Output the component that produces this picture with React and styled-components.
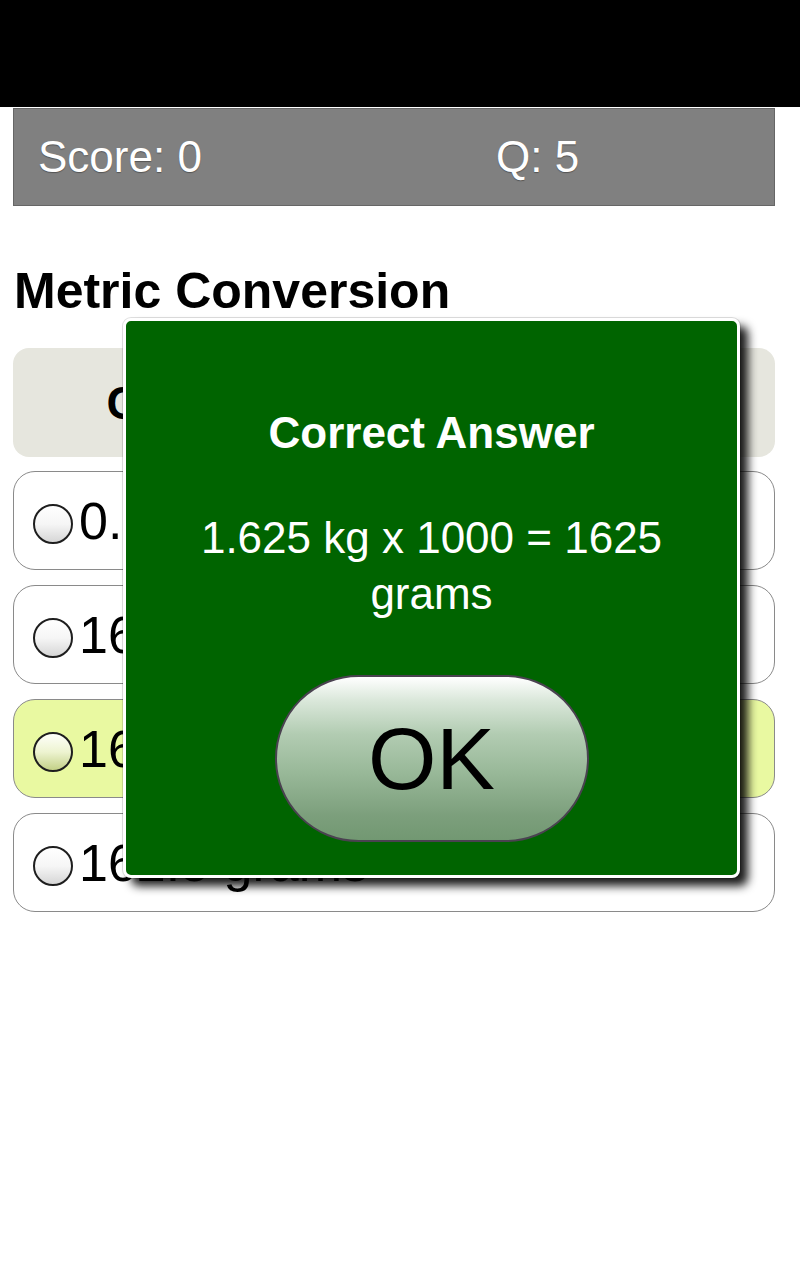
import React from "react";
import styled, { createGlobalStyle } from "styled-components";

const GlobalStyle = createGlobalStyle`
  html, body {
    margin: 0;
    padding: 0;
    background: #fff;
  }
  body {
    font-family: "Liberation Sans", Arial, Helvetica, sans-serif;
  }
`;

const Page = styled.div`
  position: relative;
  width: 800px;
  height: 1280px;
  overflow: hidden;
  background: #fff;
`;

const StatusBar = styled.div`
  height: 107px;
  background: #000;
`;

const Content = styled.div`
  padding: 1px 25px 0 13px;
`;

const ScoreBar = styled.div`
  height: 96px;
  display: grid;
  grid-template-columns: 458px 1fr;
  align-items: center;
  padding: 0 0 0 24px;
  background: #808080;
  border: 1px solid #666;
  color: #fff;
  font-size: 44px;
  text-shadow: 0 1px 1px rgba(0, 0, 0, 0.35);
`;

const Title = styled.h1`
  margin: 57px 0 0 1px;
  font-size: 50px;
  line-height: 57px;
  font-weight: bold;
  color: #000;
`;

const Question = styled.div`
  margin-top: 28px;
  height: 109px;
  display: flex;
  align-items: center;
  justify-content: center;
  background: #e6e6de;
  border-radius: 16px;
  font-size: 46px;
  font-weight: bold;
  color: #000;
`;

const Answers = styled.div`
  margin-top: 14px;
  display: flex;
  flex-direction: column;
  gap: 15px;
`;

const Answer = styled.label`
  height: 99px;
  box-sizing: border-box;
  display: flex;
  align-items: center;
  gap: 6px;
  padding-left: 19px;
  background: ${({ selected }) => (selected ? "#e9f9a1" : "#fff")};
  border: 1.5px solid #8a8a8a;
  border-radius: 22px;
  font-size: 52px;
  color: #000;
`;

const Radio = styled.span`
  flex: none;
  width: 40px;
  height: 40px;
  box-sizing: border-box;
  margin-top: 6px;
  border-radius: 50%;
  border: 2px solid #1e1e1e;
  background: linear-gradient(
    to bottom,
    rgba(255, 255, 255, 0.95) 0%,
    rgba(240, 240, 240, 0.6) 50%,
    rgba(0, 0, 0, 0.16) 100%
  );
`;

const Dialog = styled.div`
  position: absolute;
  left: 123px;
  top: 318px;
  width: 617px;
  height: 560px;
  box-sizing: border-box;
  display: flex;
  flex-direction: column;
  align-items: center;
  padding: 86px 28px 0;
  background: #006400;
  border: 3px solid #fff;
  border-radius: 8px;
  box-shadow: 0 0 0 1px rgba(0, 0, 0, 0.12), 8px 8px 10px rgba(0, 0, 0, 0.9);
  color: #fff;
  text-align: center;
`;

const DialogTitle = styled.div`
  font-size: 44px;
  font-weight: bold;
  line-height: 51px;
`;

const DialogText = styled.div`
  margin-top: 52px;
  font-size: 44px;
  line-height: 56px;
`;

const OkButton = styled.button`
  margin-top: 53px;
  width: 314px;
  height: 167px;
  box-sizing: border-box;
  border-radius: 84px;
  border: 2px solid #4a4250;
  background: linear-gradient(
    to bottom,
    #ffffff 0%,
    #dbe8db 14%,
    #b2ccb2 35%,
    #97b797 60%,
    #7c9f7c 85%,
    #729872 100%
  );
  font-family: "Liberation Sans", Arial, sans-serif;
  font-size: 88px;
  color: #000;
  padding: 0;
  cursor: pointer;
`;

const answers = [
  { text: "0.1625 grams" },
  { text: "16.25 grams" },
  { text: "1625 grams", selected: true },
  { text: "162.5 grams" },
];

export default function App() {
  return (
    <>
      <GlobalStyle />
      <Page>
        <StatusBar />
        <Content>
          <ScoreBar>
            <span>Score: 0</span>
            <span>Q: 5</span>
          </ScoreBar>
          <Title>Metric Conversion</Title>
          <Question>Convert 1.625 kg to grams</Question>
          <Answers>
            {answers.map((a, i) => (
              <Answer key={i} selected={a.selected}>
                <Radio />
                {a.text}
              </Answer>
            ))}
          </Answers>
        </Content>
        <Dialog>
          <DialogTitle>Correct Answer</DialogTitle>
          <DialogText>1.625 kg x 1000 = 1625 grams</DialogText>
          <OkButton>OK</OkButton>
        </Dialog>
      </Page>
    </>
  );
}
